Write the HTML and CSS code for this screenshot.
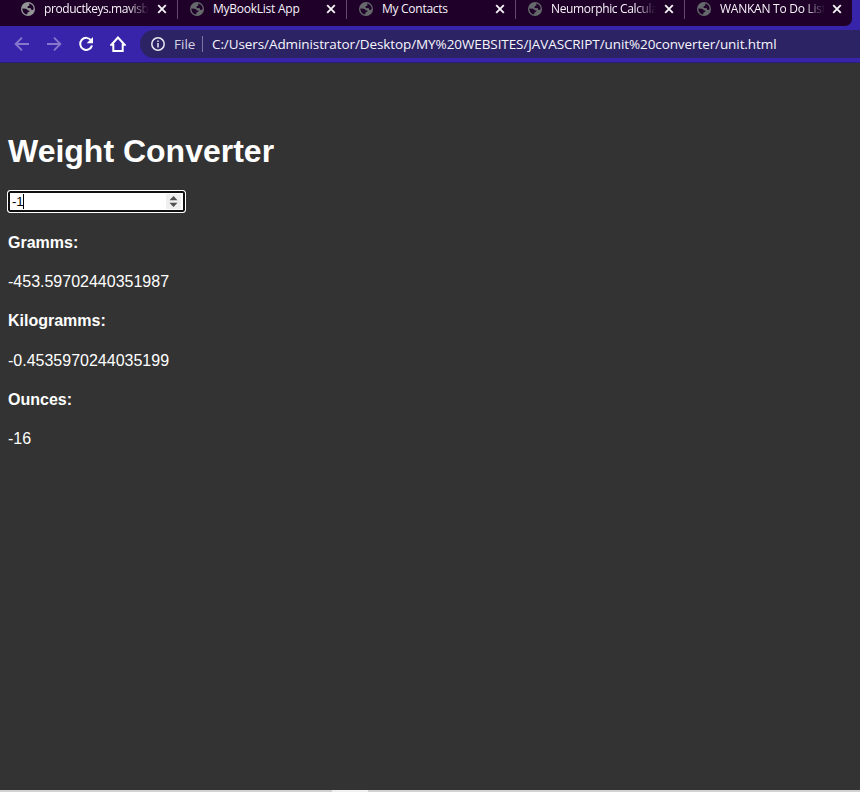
FILE: index.html
```html
<!DOCTYPE html>
<html lang="en">
<head>
<meta charset="utf-8">
<title>Weight Converter</title>
<link rel="stylesheet" href="styles.css">
</head>
<body>
<svg class="defs" width="0" height="0" aria-hidden="true">
  <symbol id="globe" viewBox="0 0 14 14">
    <circle cx="7" cy="7" r="7"/>
    <path class="land" d="M1.3 6.5 L4.8 6.8 Q6.8 7.2 6.8 8.6 L8.5 8.6 Q8.8 10.6 6.4 10.4 L6.2 12.6 Q1.6 12 1.3 6.5Z M8.3 1.4 Q12.3 2.5 12.7 6.5 Q12.2 8.2 11 8 Q9.7 7.6 9.9 6.2 L6.8 6 Q6 4.8 7 4 L8.3 3.8Z"/>
  </symbol>
  <symbol id="close" viewBox="0 0 10 10"><path d="M1.2 1.2 L8.8 8.8 M8.8 1.2 L1.2 8.8"/></symbol>
</svg>
<div class="window">
  <div class="tabs">
    <div class="tab active"><svg class="globe"><use href="#globe"/></svg><span class="title fade t1">productkeys.mavisb</span><svg class="close"><use href="#close"/></svg></div>
    <div class="tab"><svg class="globe"><use href="#globe"/></svg><span class="title t2">MyBookList App</span><svg class="close"><use href="#close"/></svg></div>
    <div class="tab"><svg class="globe"><use href="#globe"/></svg><span class="title t3">My Contacts</span><svg class="close"><use href="#close"/></svg></div>
    <div class="tab"><svg class="globe"><use href="#globe"/></svg><span class="title fade t4">Neumorphic Calcula</span><svg class="close"><use href="#close"/></svg></div>
    <div class="tab"><svg class="globe"><use href="#globe"/></svg><span class="title fade t5">WANKAN To Do List</span><svg class="close"><use href="#close"/></svg></div>
  </div>
  <div class="toolbar">
    <svg class="nav dim" viewBox="0 0 16 16"><path d="M15 8 H2 M8 1.6 L1.6 8 L8 14.4"/></svg>
    <svg class="nav dim" viewBox="0 0 16 16"><path d="M1 8 H14 M8 1.6 L14.4 8 L8 14.4"/></svg>
    <svg class="nav" viewBox="0 0 16 16"><path d="M13.2 4.5 A6 6 0 1 0 14 9.5"/><path class="solid" d="M15 1 V7.3 H8.7Z"/></svg>
    <svg class="nav" viewBox="0 0 16 16"><path d="M8 1.5 L1.4 8.7 H3.3 V14.9 H12.7 V8.7 H14.6Z"/></svg>
    <div class="address">
      <svg class="info" viewBox="0 0 14 14"><circle cx="7" cy="7" r="6.2"/><path d="M7 6.1 V10.5 M7 3.4 V5"/></svg>
      <span class="scheme">File</span>
      <span class="url">C:/Users/Administrator/Desktop/MY%20WEBSITES/JAVASCRIPT/unit%20converter/unit.html</span>
    </div>
  </div>
  <main class="page">
    <h1>Weight Converter</h1>
    <div class="number">
      <span class="value">-1</span>
      <svg class="spin" viewBox="0 0 15 15"><path d="M3.5 6.2 L7.5 2 L11.5 6.2Z M3.5 8.8 L7.5 13 L11.5 8.8Z"/></svg>
    </div>
    <p><b>Gramms:</b></p>
    <p>-453.59702440351987</p>
    <p><b>Kilogramms:</b></p>
    <p>-0.4535970244035199</p>
    <p><b>Ounces:</b></p>
    <p>-16</p>
  </main>
  <div class="bottom"><div class="highlight"></div></div>
</div>
</body>
</html>
```
FILE: styles.css
```css
* { box-sizing: border-box; }
body { margin: 0; background: #333; color: #fff; font: 16px "Liberation Sans", sans-serif; overflow: hidden; }
svg { display: block; flex: none; }
.defs { position: absolute; }
.window { width: 860px; height: 792px; display: flex; flex-direction: column; background: linear-gradient(#3824aa 0 26px, #333 26px); }

.tabs { height: 26px; width: 852px; flex: none; padding-left: 9px; display: flex; background: #1e0029; border-radius: 0 0 7px 0; font: 12px/18px "Open Sans", sans-serif; overflow: hidden; }
.tab { width: 169px; height: 19px; flex: none; display: flex; border-right: 1px solid #64476e; padding: 0 0 0 12px; }
.tab:last-child { width: 155px; border: 0; }
.globe { width: 14px; height: 14px; margin-top: 2px; fill: #66696c; }
.active .globe { fill: #929496; }
.land { fill: #1e0029; }
.title { width: 105px; margin-left: 9px; flex: none; white-space: nowrap; overflow: hidden; color: #f7f3f8; }
.fade { -webkit-mask-image: linear-gradient(90deg, #000 80%, transparent); mask-image: linear-gradient(90deg, #000 80%, transparent); }
.close { width: 10px; height: 10px; margin: 4px 0 0 8px; stroke: #f5f2f6; stroke-width: 1.9; }
.tab:last-child .close { margin-left: 7px; }
.t1 { letter-spacing: -.42px; }
.t2 { letter-spacing: -.25px; }
.t3 { letter-spacing: -.28px; }
.t4 { letter-spacing: -.36px; }
.t5 { letter-spacing: -.25px; }

.toolbar { height: 37px; flex: none; display: flex; align-items: center; padding-left: 14px; background: #3824aa; border-bottom: 1px solid #2b1c75; }
.nav { width: 16px; height: 16px; margin-right: 16px; fill: none; stroke: #fff; stroke-width: 2; }
.dim { stroke: #8778cd; stroke-width: 1.8; }
.nav .solid { fill: #fff; stroke: none; }
.address { height: 28px; flex: 1; margin-left: -2px; padding-left: 11px; display: flex; align-items: center; background: #2c2365; border-radius: 14px 0 0 14px; font: 13.5px/18px "Open Sans", sans-serif; }
.info { width: 14px; height: 14px; fill: none; stroke: #e9e7f2; stroke-width: 1.5; }
.scheme { width: 29px; height: 16px; line-height: 16px; margin: 0 9px; flex: none; border-right: 1px solid #7c75a2; color: #d5d3e1; }
.url { white-space: nowrap; color: #f7f6fb; letter-spacing: -.09px; }

.page { flex: 1; min-height: 0; padding: 68px 8px 0; background: #333; }
h1 { margin: 0 0 20px; font-size: 32px; line-height: 40px; white-space: nowrap; }
.number { width: 179px; height: 23px; margin-left: -1px; margin-top: -1px; display: flex; align-items: center; justify-content: space-between; background: #fff; border: 1px solid #fff; border-radius: 3px; box-shadow: inset 0 0 0 2px #101010; padding: 0 4px; color: #000; font-size: 13.333px; }
.value { border-right: 1px solid #000; line-height: 15px; height: 15px; letter-spacing: -.3px; }
.spin { width: 15px; height: 15px; background: #efefef; fill: #505050; }
p { margin: 0 0 21px; line-height: 18.25px; }
.number + p { margin-top: 20.8px; }
.bottom { height: 2px; flex: none; background: #d2d2d2; }
.highlight { width: 36px; height: 2px; margin-left: 332px; background: #f1f1f1; }
```
